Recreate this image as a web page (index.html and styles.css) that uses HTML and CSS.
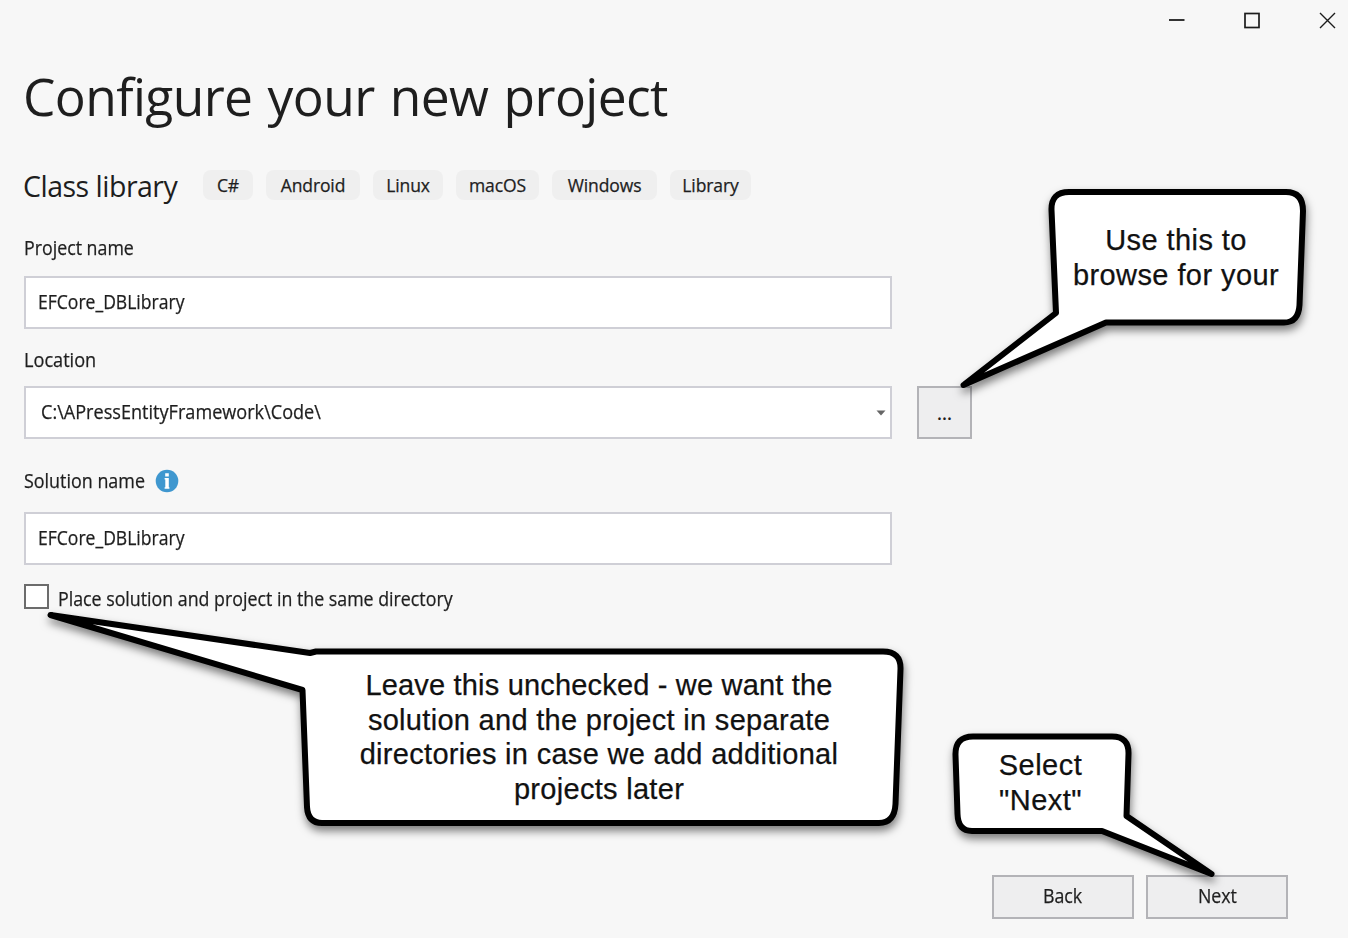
FILE: index.html
```
<!DOCTYPE html>
<html lang="en">
<head>
<meta charset="utf-8">
<title>Configure your new project</title>
<link rel="stylesheet" href="styles.css">
</head>
<body>
<div class="window">
  <header class="titlebar">
    <svg class="control" viewBox="0 0 18 18"><path d="M1 9H16.500" stroke-width="1.8"/></svg>
    <svg class="control" viewBox="0 0 18 18"><rect x="2" y="2.500" width="14" height="14" stroke-width="1.7"/></svg>
    <svg class="control" viewBox="0 0 18 18"><path d="M2 2L17 17M17 2L2 17" stroke-width="1.4"/></svg>
  </header>
  <main class="content">
    <h1 class="title"><span>Configure your new project</span></h1>
    <div class="template">
      <h2 class="template-name"><span>Class library</span></h2>
      <ul class="tags">
        <li class="tag tag-cs"><span>C#</span></li>
        <li class="tag tag-android"><span>Android</span></li>
        <li class="tag tag-linux"><span>Linux</span></li>
        <li class="tag tag-macos"><span>macOS</span></li>
        <li class="tag tag-windows"><span>Windows</span></li>
        <li class="tag tag-library"><span>Library</span></li>
      </ul>
    </div>
    <div class="label label-project"><span class="narrow">Project name</span></div>
    <div class="field"><span class="narrow">EFCore_DBLibrary</span></div>
    <div class="label label-location"><span class="narrow">Location</span></div>
    <div class="location">
      <div class="field field-combo"><span class="narrow">C:\APressEntityFramework\Code\</span>
        <svg class="arrow" viewBox="0 0 10 6"><path d="M0.5 0.5H9.5L5 5.5Z"/></svg>
      </div>
      <button class="button browse">...</button>
    </div>
    <div class="label label-solution"><span class="narrow">Solution name</span>
      <svg class="info" viewBox="0 0 24 24"><circle cx="12" cy="12" r="11.3" fill="#3f97cf"/><path d="M10.2 4.2H13.800V7.4H10.2ZM9.6 9H13.800V18.2H14.400V19.8H9.6V18.2H10.3V10.500H9.6Z" fill="#fff"/></svg>
    </div>
    <div class="field"><span class="narrow">EFCore_DBLibrary</span></div>
    <label class="check"><i class="box"></i><span class="narrow">Place solution and project in the same directory</span></label>
  </main>
  <footer class="actions">
    <button class="button"><span class="narrow">Back</span></button>
    <button class="button"><span class="narrow">Next</span></button>
  </footer>
  <svg class="callouts" viewBox="0 0 1348 938">
    <path d="M1069 192H1286Q1303 192 1303 211L1299.500 305Q1298.500 322.500 1284 322.500H1106L963.500 385L1056 313L1051.500 210Q1051 192 1069 192Z"/>
    <path d="M316 651.500H883Q901 651.500 900.500 669L895.500 804Q894.500 823 879 823H322Q308 823 307 807L302.500 690L50.500 615L310 653Z"/>
    <path d="M973 736.500H1112Q1129 736.500 1128.500 754L1126.500 816L1211.500 874L1102 831H972Q958 831 957.500 814L955.500 755Q955 736.500 973 736.500Z"/>
  </svg>
  <div class="note note-browse"><span>Use this to</span><span>browse for your</span></div>
  <div class="note note-check"><span>Leave this unchecked - we want the</span><span>solution and the project in separate</span><span>directories in case we add additional</span><span>projects later</span></div>
  <div class="note note-next"><span>Select</span><span>"Next"</span></div>
</div>
</body>
</html>
```
FILE: styles.css
```
* { box-sizing: border-box; }
body { margin: 0; background: #f7f7f7; color: #1e1e1e; font-family: "Open Sans", "Noto Sans", sans-serif; }
.window { position: relative; width: 1348px; height: 938px; overflow: hidden; display: flex; flex-direction: column; }
.titlebar { height: 42px; flex: none; display: flex; justify-content: flex-end; gap: 57px; padding: 11px 12px 0 0; }
.control { width: 18px; height: 18px; fill: none; stroke: #1c1c1c; }
.content { flex: 1; padding: 0 0 0 24px; }
.title { margin: 0; height: 110px; line-height: 108px; font-size: 51.500px; font-weight: 400; letter-spacing: -0.6px; word-spacing: 2.400px; text-indent: -1px; white-space: nowrap; }
.template { display: flex; align-items: center; height: 66px; }
.template-name { margin: 0; width: 179px; padding-top: 2px; font-size: 28.500px; font-weight: 400; letter-spacing: -0.5px; text-indent: -1px; white-space: nowrap; }
.tags { display: flex; gap: 13px; margin: 0; padding: 0; list-style: none; }
.tag { height: 30px; display: flex; align-items: center; justify-content: center; border-radius: 8px; background: #efefef; font-size: 17.500px; font-weight: 500; letter-spacing: -0.1px; -webkit-text-stroke: 0.25px #1e1e1e; }
.tag-cs { width: 50px; }
.tag-android { width: 94px; }
.tag-linux { width: 70px; }
.tag-macos { width: 83px; }
.tag-windows { width: 105px; }
.tag-library { width: 81px; }
.narrow { display: inline-block; white-space: nowrap; transform: scaleX(.912); transform-origin: left; -webkit-text-stroke: 0.25px #1e1e1e; }
.label { display: flex; align-items: center; font-size: 19.500px; }
.label-project { height: 58px; }
.label-location { height: 57px; padding-top: 3px; }
.label-location .narrow { transform: scaleX(.93); }
.label-solution { height: 73px; padding-top: 11px; gap: 9px; }
.label-solution .narrow { width: 122px; margin-top: -2px; transform: scaleX(.918); }
.field { width: 868px; height: 53px; display: flex; align-items: center; padding: 0 12px 2px; border: 2px solid #cfcfd6; background: #fff; font-size: 19.500px; }
.field .narrow { transform: scaleX(.9); }
.field-combo { justify-content: space-between; padding: 0 4px 2px 15px; }
.field-combo .narrow { transform: scaleX(.928); }
.arrow { width: 10px; height: 6px; fill: #666; margin-top: 2px; }
.info { width: 24px; height: 24px; }
.location { display: flex; gap: 25px; }
.button { width: 142px; height: 44px; padding: 0 0 3px; border: 2px solid #b3b3b7; border-radius: 0; background: #eeeeef; color: #1e1e1e; font: 19.500px "Open Sans", "Noto Sans", sans-serif; }
.button .narrow { transform-origin: center; }
.browse { width: 55px; height: 53px; padding: 0; font-size: 18px; font-weight: 600; }
.check { display: flex; gap: 9px; padding-top: 19px; font-size: 19.500px; line-height: 29px; }
.box { width: 25px; height: 25px; border: 2px solid #6c6c6c; background: #fff; }
.actions { display: flex; justify-content: flex-end; gap: 12px; padding: 0 60px 19px 0; }
.callouts { position: absolute; inset: 0; width: 1348px; height: 938px; fill: #fff; stroke: #000; stroke-width: 6; stroke-linejoin: round; filter: drop-shadow(1px 5px 4px rgba(0,0,0,.5)); pointer-events: none; }
.note { position: absolute; display: flex; flex-direction: column; align-items: center; color: #111; font: 29px/34.700px "Liberation Sans", Arial, sans-serif; letter-spacing: 0.3px; white-space: nowrap; -webkit-text-stroke: 0.25px #111; }
.note-browse { left: 1051px; top: 223px; width: 250px; letter-spacing: 0.42px; }
.note-check { left: 303px; top: 668px; width: 592px; }
.note-check span:first-child { letter-spacing: 0.18px; }
.note-next { left: 956px; top: 748px; width: 169px; letter-spacing: 0.5px; }
```
